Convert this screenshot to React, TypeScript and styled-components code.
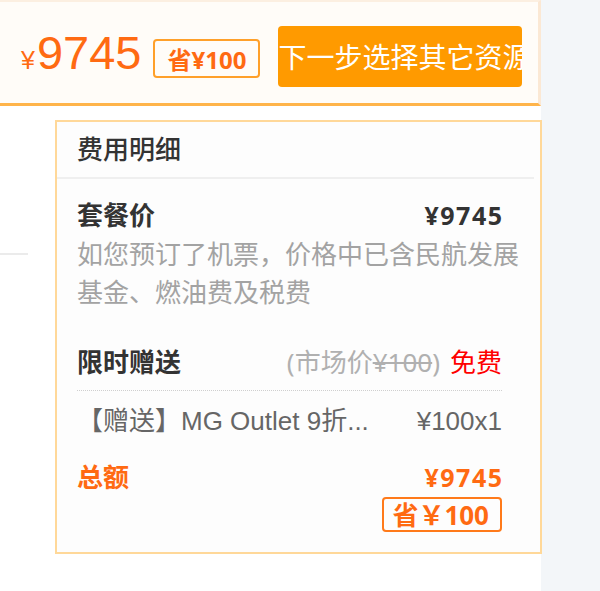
import React from "react";
import styled, { createGlobalStyle } from "styled-components";

const GlobalStyle = createGlobalStyle`
  html, body {
    margin: 0;
    padding: 0;
    background: #ffffff;
  }
  body {
    font-family: "Noto Sans", "Noto Sans CJK SC", sans-serif;
  }
`;

const Page = styled.div`
  display: flex;
  width: 600px;
  height: 591px;
  overflow: hidden;
  background: #ffffff;
`;

const MainCol = styled.div`
  position: relative;
  flex: none;
  width: 541px;
`;

const SideRail = styled.div`
  flex: 1;
  background: #f3f6f9;
`;

const TopBar = styled.div`
  box-sizing: border-box;
  display: flex;
  align-items: center;
  height: 106px;
  padding-left: 21px;
  background: #fffcf8;
  border-top: 2px solid #fcefe1;
  border-right: 3px solid #fbe8d4;
  border-bottom: 3px solid #ffb44a;
`;

const Price = styled.div`
  display: flex;
  align-items: baseline;
  color: #ff6a12;
  font-family: "Liberation Sans", "Noto Sans", sans-serif;
  margin-top: -1px;
`;

const Yen = styled.span`
  font-size: 25px;
  margin-right: 2px;
`;

const Amount = styled.span`
  font-size: 47px;
  line-height: 1;
`;

const SaveTag = styled.span<{ $small?: boolean }>`
  box-sizing: border-box;
  display: inline-flex;
  align-items: center;
  justify-content: center;
  border: 2px solid ${(p) => (p.$small ? "#ff7a1a" : "#ffa02a")};
  border-radius: 4px;
  color: #ff6a12;
  font-weight: bold;
  white-space: nowrap;
  height: ${(p) => (p.$small ? "35px" : "39px")};
  padding: ${(p) => (p.$small ? "0 11px 0 8px" : "0 12px")};
  font-size: ${(p) => (p.$small ? "26px" : "24px")};
`;

const TopSave = styled(SaveTag)`
  margin-left: 12px;
  margin-top: 12px;
`;

const NextButton = styled.button`
  flex: none;
  width: 244px;
  height: 61px;
  margin-left: 18px;
  margin-top: 8px;
  padding: 0;
  border: none;
  border-radius: 4px;
  background: #ff9a00;
  color: #ffffff;
  font-family: "Noto Sans CJK SC", sans-serif;
  font-size: 28px;
  line-height: 61px;
  text-align: left;
  white-space: nowrap;
  overflow: hidden;
`;

const Underlay = styled.div`
  width: 28px;
  margin-top: 147px;
  border-top: 2px solid #ebebeb;
`;

const DetailPanel = styled.div`
  position: absolute;
  left: 55px;
  top: 120px;
  z-index: 2;
  box-sizing: border-box;
  width: 487px;
  background: #fdfdfd;
  border: 2px solid #ffd899;
  color: #333333;
  font-size: 26px;
`;

const PanelHead = styled.div`
  height: 55px;
  line-height: 55px;
  margin-right: 6px;
  padding-left: 20px;
  border-bottom: 2px solid #efefef;
  font-weight: 500;
`;

const PanelBody = styled.div`
  padding: 18px 18px 20px 20px;
`;

const Row = styled.div<{ $gap?: number }>`
  display: flex;
  justify-content: space-between;
  align-items: center;
  line-height: 36px;
  padding-right: 20px;
  margin-top: ${(p) => p.$gap ?? 0}px;
`;

const Label = styled.span<{ $tone?: "dark" | "orange" }>`
  font-weight: bold;
  color: ${(p) => (p.$tone === "orange" ? "#ff6a12" : "#333333")};
`;

const Value = styled.span<{ $tone?: "dark" | "orange" }>`
  font-size: 25px;
  font-weight: bold;
  letter-spacing: 1.5px;
  margin-right: -1.5px;
  color: ${(p) => (p.$tone === "orange" ? "#ff6a12" : "#333333")};
`;

const Note = styled.p`
  margin: 2px 0 0;
  line-height: 38px;
  color: #a3a3a3;
`;

const GiftHead = styled(Row)`
  padding-bottom: 10px;
  margin-right: 20px;
  padding-right: 0;
  border-bottom: 1px dotted #cfcfcf;
`;

const Market = styled.span`
  color: #b0b0b0;
  del {
    text-decoration-thickness: 2px;
  }
`;

const Free = styled.span`
  color: #ff0000;
  margin-left: 10px;
`;

const GiftLine = styled(Row)`
  color: #666666;
  font-family: "Liberation Sans", "Noto Sans CJK SC", sans-serif;
`;

const Total = styled.div`
  display: flex;
  flex-direction: column;
  align-items: flex-end;
  gap: 2px;
`;

export default function App() {
  return (
    <>
      <GlobalStyle />
      <Page>
        <MainCol>
          <TopBar>
            <Price>
              <Yen>¥</Yen>
              <Amount>9745</Amount>
            </Price>
            <TopSave>省¥100</TopSave>
            <NextButton>下一步选择其它资源</NextButton>
          </TopBar>
          <Underlay />
          <DetailPanel>
            <PanelHead>费用明细</PanelHead>
            <PanelBody>
              <Row>
                <Label>套餐价</Label>
                <Value>¥9745</Value>
              </Row>
              <Note>如您预订了机票，价格中已含民航发展基金、燃油费及税费</Note>
              <GiftHead $gap={33}>
                <Label>限时赠送</Label>
                <span>
                  <Market>
                    (市场价<del>¥100</del>)
                  </Market>
                  <Free>免费</Free>
                </span>
              </GiftHead>
              <GiftLine $gap={12}>
                <span>【赠送】MG Outlet 9折...</span>
                <span>¥100x1</span>
              </GiftLine>
              <Row $gap={20} style={{ alignItems: "flex-start" }}>
                <Label $tone="orange">总额</Label>
                <Total>
                  <Value $tone="orange">¥9745</Value>
                  <SaveTag $small>省￥100</SaveTag>
                </Total>
              </Row>
            </PanelBody>
          </DetailPanel>
        </MainCol>
        <SideRail />
      </Page>
    </>
  );
}
